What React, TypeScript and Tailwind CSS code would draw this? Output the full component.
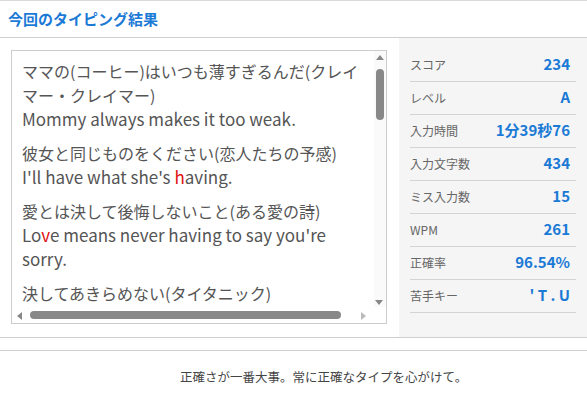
const font = { fontFamily: '"Noto Sans CJK JP", "Noto Sans", sans-serif' };

const stats: { label: string; value: string }[] = [
  { label: "スコア", value: "234" },
  { label: "レベル", value: "A" },
  { label: "入力時間", value: "1分39秒76" },
  { label: "入力文字数", value: "434" },
  { label: "ミス入力数", value: "15" },
  { label: "WPM", value: "261" },
  { label: "正確率", value: "96.54%" },
  { label: "苦手キー", value: "' T . U" },
];

function Miss({ c }: { c: string }) {
  return <span className="text-[#e01010]">{c}</span>;
}

export default function App() {
  return (
    <div className="h-[400px] w-[587px] overflow-hidden bg-white" style={font}>
      <header className="flex h-[38px] items-center border-y border-t-[#d9d9d9] border-b-[#cfcfcf] pl-[8px]">
        <h1 className="text-[15px] font-bold text-[#1b7ad6]">今回のタイピング結果</h1>
      </header>

      <section className="flex border-b border-[#cfcfcf]">
        <div className="flex-1 pl-[11px] pr-[12px] pt-[12px] pb-[13px]">
          <div className="grid h-[274px] grid-cols-[1fr_12px] grid-rows-[1fr_16px] border border-[#cccccc]">
            <div className="overflow-hidden pl-[10px] pr-[2px] pt-[9px] text-[16px] leading-[23.5px] text-[#555555]">
              <p>ママの(コーヒー)はいつも薄すぎるんだ(クレイマー・クレイマー)</p>
              <p className="text-[17px]">Mommy always makes it too weak.</p>
              <p className="mt-[11px]">彼女と同じものをください(恋人たちの予感)</p>
              <p className="text-[17px]">
                I'll have what she's <Miss c="h" />aving.
              </p>
              <p className="mt-[11px]">愛とは決して後悔しないこと(ある愛の詩)</p>
              <p className="text-[17px]">
                Lo<Miss c="v" />e means never having to say you're sorry.
              </p>
              <p className="mt-[12px]">決してあきらめない(タイタニック)</p>
            </div>

            <div className="relative bg-[#fafafa]">
              <div className="absolute left-[2px] top-[4px] h-0 w-0 border-x-[4px] border-b-[5px] border-x-transparent border-b-[#888888]" />
              <div className="absolute left-[2px] top-[18px] h-[51px] w-[8px] rounded-full bg-[#888888]" />
              <div className="absolute bottom-[2px] left-[1px] h-0 w-0 border-x-[4px] border-t-[5px] border-x-transparent border-t-[#888888]" />
            </div>

            <div className="relative">
              <div className="absolute left-[5px] top-[5px] h-0 w-0 border-y-[4px] border-r-[5px] border-y-transparent border-r-[#888888]" />
              <div className="absolute left-[18px] top-[4px] h-[8px] w-[311px] rounded-full bg-[#888888]" />
              <div className="absolute right-[8px] top-[5px] h-0 w-0 border-y-[4px] border-l-[5px] border-y-transparent border-l-[#bbbbbb]" />
            </div>
            <div />
          </div>
        </div>

        <div className="w-[188px] bg-[#f5f5f5] px-[11px] pt-[11px] pb-[23px]">
          {stats.map((s) => (
            <div
              key={s.label}
              className="flex h-[33px] items-center justify-between border-b border-[#d4d4d4] pb-[1px] pr-[6px]"
            >
              <span className="text-[12px] text-[#666666]">{s.label}</span>
              <span className="text-[15px] font-bold text-[#1b7ad6]">{s.value}</span>
            </div>
          ))}
        </div>
      </section>

      <div className="mt-[12px] border-t border-[#cfcfcf] pl-[180px] pt-[17px] text-[12.5px] text-[#444444]">
        正確さが一番大事。常に正確なタイプを心がけて。
      </div>
    </div>
  );
}
